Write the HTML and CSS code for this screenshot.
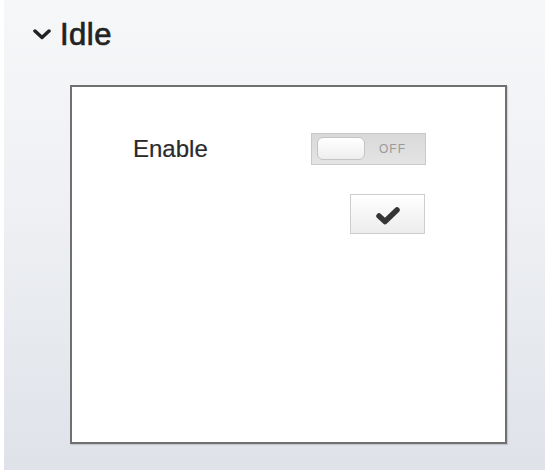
FILE: index.html
```html
<!DOCTYPE html>
<html>
<head>
<meta charset="utf-8">
<link rel="stylesheet" href="styles.css">
</head>
<body>
<div class="panel">
  <div class="header">
    <svg class="chevron" width="18" height="11" viewBox="0 0 18 11"><path d="M2 2 L9 8.5 L16 2" fill="none" stroke="#222" stroke-width="3.5" stroke-linecap="round" stroke-linejoin="round"/></svg>
    <span class="title">Idle</span>
  </div>
  <div class="box">
    <div class="row">
      <span class="label">Enable</span>
      <div class="toggle">
        <div class="knob"></div>
        <span class="off">OFF</span>
      </div>
    </div>
    <div class="row2">
      <button class="check">
        <svg width="26" height="19" viewBox="0 0 26 19"><path d="M4 10 L10 15.5 L22 4" fill="none" stroke="#353535" stroke-width="5.5" stroke-linecap="round" stroke-linejoin="round"/></svg>
      </button>
    </div>
  </div>
</div>
</body>
</html>
```

FILE: styles.css
```css
html, body {
  margin: 0;
  padding: 0;
  background: #ffffff;
}
body {
  font-family: "Liberation Sans", Arial, sans-serif;
  width: 553px;
  height: 473px;
}
.panel {
  margin-left: 4px;
  width: 541px;
  height: 470px;
  box-sizing: border-box;
  padding-top: 18px;
  background: linear-gradient(to bottom, #f6f7f9 0%, #eef0f3 45%, #dfe2e9 100%);
}
.header {
  display: flex;
  align-items: center;
  height: 34px;
  padding-left: 29px;
}
.chevron {
  margin-right: 9px;
  margin-top: -1px;
}
.title {
  font-size: 31px;
  line-height: 34px;
  color: #222;
  letter-spacing: 0.5px;
  -webkit-text-stroke: 0.7px #222;
}
.box {
  margin-top: 33px;
  margin-left: 66px;
  width: 437px;
  height: 359px;
  box-sizing: border-box;
  border: 2px solid #707070;
  background: #ffffff;
  padding: 45px 79px 0 61px;
  box-shadow: 1px 1px 1px rgba(0,0,0,0.12);
}
.row {
  display: flex;
  justify-content: space-between;
  align-items: center;
}
.label {
  font-size: 24px;
  line-height: 32px;
  color: #2a2a2a;
  padding-top: 1px;
  -webkit-text-stroke: 0.2px #2a2a2a;
}
.toggle {
  width: 115px;
  height: 32px;
  box-sizing: border-box;
  border: 1px solid #c9c9c9;
  background: linear-gradient(to bottom, #d9d9d9, #e4e4e4);
  display: flex;
  align-items: center;
  padding-left: 5px;
}
.knob {
  width: 48px;
  height: 23px;
  box-sizing: border-box;
  border: 1px solid #c4c4c4;
  border-radius: 6px;
  background: linear-gradient(to bottom, #ffffff, #eeeeee);
}
.off {
  margin-left: 14px;
  font-size: 12px;
  letter-spacing: 1px;
  color: #9a9a9a;
}
.row2 {
  display: flex;
  justify-content: flex-end;
  margin-top: 29px;
}
.check {
  width: 75px;
  height: 40px;
  box-sizing: border-box;
  border: 1px solid #cdcdcd;
  background: linear-gradient(to bottom, #ffffff, #ececec);
  padding: 0;
  margin: 0;
  margin-right: 1px;
  display: flex;
  align-items: center;
  justify-content: center;
}
.check svg {
  margin-top: 3px;
}
```
